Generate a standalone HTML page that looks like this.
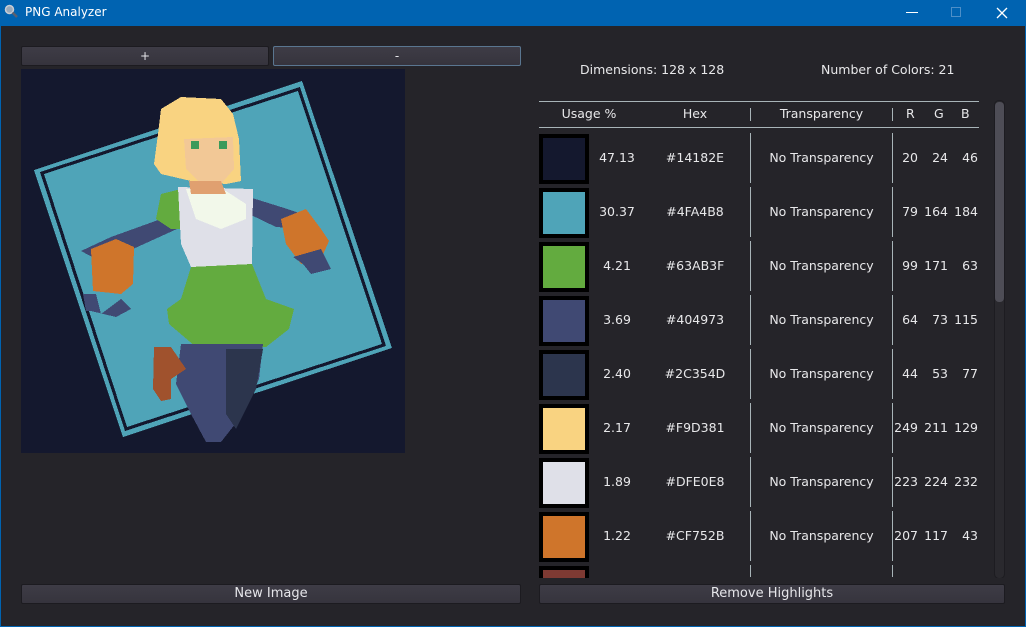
<!DOCTYPE html>
<html><head><meta charset="utf-8"><style>
*{margin:0;padding:0;box-sizing:border-box}
body{width:1026px;height:627px;overflow:hidden;background:#0063b1;font-family:"DejaVu Sans","Liberation Sans",sans-serif;font-size:12px;color:#e8e8ea;position:relative}
.a{position:absolute}
#main{left:1px;top:26px;width:1024px;height:600px;background:#252429}
.btn{position:absolute;background:linear-gradient(#3e3c46,#36343d);border:1px solid #1c1b20;border-radius:2px;text-align:center;color:#e6e6ea;line-height:18px}
.t{position:absolute;text-align:center;white-space:nowrap}
.sw{position:absolute;left:539px;width:50px;height:50px;border:4px solid #000}
.vl{position:absolute;width:1px;background:#a8b4b8}
</style></head><body>
<div class="a" style="left:0;top:0;width:1026px;height:26px;background:#0063b1"></div>
<svg class="a" style="left:4px;top:4px" width="14" height="14"><circle cx="5.5" cy="5.5" r="4" fill="#9ab" stroke="#c8ccd4" stroke-width="1.5"/><line x1="8.5" y1="8.5" x2="13" y2="13" stroke="#5a6070" stroke-width="2.5"/></svg>
<div class="a" style="left:25px;top:5px;color:#fff;font-size:12px">PNG Analyzer</div>
<div class="a" style="left:906px;top:12px;width:12px;height:1px;background:#fff"></div>
<div class="a" style="left:951px;top:7px;width:10px;height:10px;border:1px solid #4d8fc8"></div>
<svg class="a" style="left:996px;top:7px" width="12" height="12"><path d="M1 1L11 11M11 1L1 11" stroke="#fff" stroke-width="1.3"/></svg>
<div class="a" id="main"></div>
<div class="btn" style="left:21px;top:46px;width:248px;height:20px">+</div>
<div class="btn" style="left:273px;top:46px;width:248px;height:20px;border-color:#5a7690">-</div>
<svg class="a" style="left:21px;top:69px" width="384" height="384" viewBox="0 0 384 384" shape-rendering="crispEdges">
<rect width="384" height="384" fill="#14182e"/>
<polygon points="281,12 371,279 102,368 13,101" fill="#4fa4b8"/>
<polygon points="279,18 365,277 104,362 19,103" fill="#14182e"/>
<polygon points="277,22 361,275 106,358 23,105" fill="#4fa4b8"/>
<polygon points="60,182 90,168 140,150 160,140 156,160 112,180 75,190" fill="#404973"/>
<polygon points="228,128 260,138 290,148 285,160 255,158 228,145" fill="#404973"/>
<polygon points="70,180 95,170 113,178 112,215 100,225 72,222" fill="#cf752b"/>
<polygon points="260,150 285,140 300,160 308,172 300,190 280,195 265,175" fill="#cf752b"/>
<polygon points="62,225 75,225 80,245 100,230 110,240 95,248 70,242 65,242" fill="#404973"/>
<polygon points="272,188 300,180 310,200 290,205 282,195" fill="#404973"/>
<polygon points="140,125 160,120 165,160 150,160 135,150" fill="#63ab3f"/>
<polygon points="157,118 232,120 231,198 170,198 160,175" fill="#dfe0e8"/>
<polygon points="165,120 205,122 225,135 225,150 200,160 175,150" fill="#f2f8ea"/>
<polygon points="170,198 231,195 245,230 273,240 268,260 245,278 175,278 148,255 146,240 160,230" fill="#63ab3f"/>
<polygon points="160,275 242,275 238,310 222,345 200,373 185,373 170,345 155,315" fill="#404973"/>
<polygon points="205,280 242,280 235,320 215,360 205,345" fill="#2c354d"/>
<polygon points="133,278 150,278 165,300 150,310 150,330 140,332 132,320" fill="#a0522d"/>
<polygon points="140,40 160,28 200,30 212,45 218,70 220,112 205,115 170,112 140,105 133,95 137,65" fill="#f9d381"/>
<polygon points="163,70 212,68 213,100 200,115 180,115 165,100" fill="#f2c896"/>
<rect x="170" y="72" width="8" height="8" fill="#3a9a5a"/><rect x="198" y="72" width="8" height="8" fill="#3a9a5a"/>
<polygon points="168,112 200,112 205,125 170,125" fill="#e0a070"/>
</svg>
<div class="btn" style="left:21px;top:584px;width:500px;height:20px;font-size:13px">New Image</div>
<div class="t" style="left:580px;top:62px;font-size:12.5px">Dimensions: 128 x 128</div>
<div class="t" style="left:821px;top:62px;font-size:12.5px">Number of Colors: 21</div>
<div class="a" style="left:539px;top:101px;width:440px;height:1px;background:#a8b4b8"></div>
<div class="a" style="left:539px;top:127px;width:440px;height:1px;background:#a8b4b8"></div>
<div class="t" style="left:539px;width:100px;top:106px;font-size:12.5px">Usage %</div>
<div class="t" style="left:645px;width:100px;top:106px;font-size:12.5px">Hex</div>
<div class="t" style="left:751px;width:141px;top:106px;font-size:12.5px">Transparency</div>
<div class="t" style="left:906px;top:106px;font-size:12.5px">R</div>
<div class="t" style="left:934px;top:106px;font-size:12.5px">G</div>
<div class="t" style="left:961px;top:106px;font-size:12.5px">B</div>
<div class="vl" style="left:750px;top:108px;height:13px"></div>
<div class="vl" style="left:892px;top:108px;height:13px"></div>
<div id="rows"></div>
<div class="a" style="left:994px;top:100px;width:11px;height:479px;border:1px solid #1d1c21;border-radius:5px;background:#2a292e"></div>
<div class="a" style="left:995px;top:102px;width:9px;height:200px;border-radius:4px;background:#4e4d56"></div>
<div class="a" style="left:530px;top:578px;width:480px;height:6px;background:#252429"></div>
<div class="btn" style="left:539px;top:584px;width:466px;height:20px;font-size:13px">Remove Highlights</div>
<script>
var d=[["#14182E","47.13","20","24","46"],["#4FA4B8","30.37","79","164","184"],["#63AB3F","4.21","99","171","63"],["#404973","3.69","64","73","115"],["#2C354D","2.40","44","53","77"],["#F9D381","2.17","249","211","129"],["#DFE0E8","1.89","223","224","232"],["#CF752B","1.22","207","117","43"],["#7E3A33","","","",""]];
var h="";
d.forEach(function(r,i){var y=134+i*54;
h+='<div class="sw" style="top:'+y+'px;height:'+(i==8?14:50)+'px;background:'+r[0]+';'+(i==8?'border-bottom:0':'')+'"></div>';
h+='<div class="vl" style="left:750px;top:'+(y-1)+'px;height:'+(i==8?12:50)+'px"></div><div class="vl" style="left:892px;top:'+(y-1)+'px;height:'+(i==8?12:50)+'px"></div>';
if(i<8){var ty=y+16;
h+='<div class="t" style="left:587px;width:60px;top:'+ty+'px;font-size:12.5px">'+r[1]+'</div>';
h+='<div class="t" style="left:645px;width:100px;top:'+ty+'px;font-size:12.5px">'+r[0]+'</div>';
h+='<div class="t" style="left:751px;width:141px;top:'+ty+'px;font-size:12.5px">No Transparency</div>';
h+='<div class="t" style="left:888px;width:30px;top:'+ty+'px;font-size:12.5px;text-align:right">'+r[2]+'</div>';
h+='<div class="t" style="left:918px;width:30px;top:'+ty+'px;font-size:12.5px;text-align:right">'+r[3]+'</div>';
h+='<div class="t" style="left:948px;width:30px;top:'+ty+'px;font-size:12.5px;text-align:right">'+r[4]+'</div>';}
});
document.getElementById("rows").innerHTML=h;
</script>
</body></html>
